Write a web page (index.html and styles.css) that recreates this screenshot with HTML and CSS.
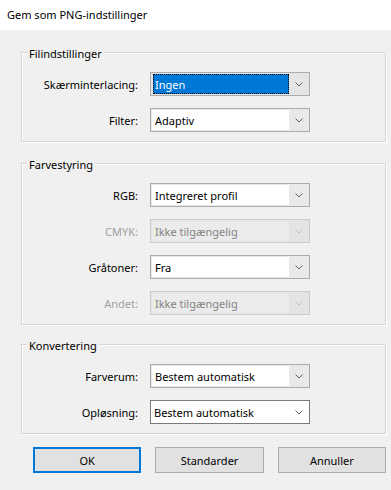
FILE: index.html
```html
<!DOCTYPE html>
<html lang="da">

<head>
  <meta charset="UTF-8">
  <meta name="viewport" content="width=device-width, initial-scale=1.0">
  <title>Gem som PNG-indstillinger</title>

  <link rel="stylesheet" href="styles.css">
</head>

<body>
  <header class="titlebar">Gem som PNG-indstillinger</header>

  <main class="dialog">
    <section class="group">
      <h2 class="group-title">Filindstillinger</h2>
      <div class="rows">
        <div class="row">
          <span class="label">Skærminterlacing:</span>
          <div class="combo combo-list">
            <span class="value"><span class="selected">Ingen</span></span>
            <span class="arrow"><svg width="8" height="5" viewBox="0 0 8 5"><path d="M0.5 0.5 L4 4 L7.5 0.5" /></svg></span>
          </div>
        </div>
        <div class="row">
          <span class="label">Filter:</span>
          <div class="combo">
            <span class="value">Adaptiv</span>
            <span class="arrow"><svg width="8" height="5" viewBox="0 0 8 5"><path d="M0.5 0.5 L4 4 L7.5 0.5" /></svg></span>
          </div>
        </div>
      </div>
    </section>

    <section class="group group-color">
      <h2 class="group-title">Farvestyring</h2>
      <div class="rows">
        <div class="row">
          <span class="label">RGB:</span>
          <div class="combo">
            <span class="value">Integreret profil</span>
            <span class="arrow"><svg width="8" height="5" viewBox="0 0 8 5"><path d="M0.5 0.5 L4 4 L7.5 0.5" /></svg></span>
          </div>
        </div>
        <div class="row">
          <span class="label disabled">CMYK:</span>
          <div class="combo combo-disabled">
            <span class="value">Ikke tilgængelig</span>
            <span class="arrow"><svg width="8" height="5" viewBox="0 0 8 5"><path d="M0.5 0.5 L4 4 L7.5 0.5" /></svg></span>
          </div>
        </div>
        <div class="row">
          <span class="label">Gråtoner:</span>
          <div class="combo">
            <span class="value">Fra</span>
            <span class="arrow"><svg width="8" height="5" viewBox="0 0 8 5"><path d="M0.5 0.5 L4 4 L7.5 0.5" /></svg></span>
          </div>
        </div>
        <div class="row">
          <span class="label disabled">Andet:</span>
          <div class="combo combo-disabled">
            <span class="value">Ikke tilgængelig</span>
            <span class="arrow"><svg width="8" height="5" viewBox="0 0 8 5"><path d="M0.5 0.5 L4 4 L7.5 0.5" /></svg></span>
          </div>
        </div>
      </div>
    </section>

    <section class="group group-convert">
      <h2 class="group-title">Konvertering</h2>
      <div class="rows">
        <div class="row">
          <span class="label">Farverum:</span>
          <div class="combo">
            <span class="value">Bestem automatisk</span>
            <span class="arrow"><svg width="8" height="5" viewBox="0 0 8 5"><path d="M0.5 0.5 L4 4 L7.5 0.5" /></svg></span>
          </div>
        </div>
        <div class="row">
          <span class="label">Opløsning:</span>
          <div class="combo combo-white">
            <span class="value">Bestem automatisk</span>
            <span class="arrow"><svg width="8" height="5" viewBox="0 0 8 5"><path d="M0.5 0.5 L4 4 L7.5 0.5" /></svg></span>
          </div>
        </div>
      </div>
    </section>

    <div class="buttons">
      <button class="btn btn-default">OK</button>
      <button class="btn">Standarder</button>
      <button class="btn">Annuller</button>
    </div>
  </main>
</body>

</html>
```

FILE: styles.css
```css
* {
  box-sizing: border-box;
}

body {
  background: #f0f0f0;
  color: #000;
  font-family: "Noto Sans", "Open Sans", sans-serif;
  font-size: 11px;
  height: 490px;
  margin: 0;
  overflow: hidden;
}

.titlebar {
  align-items: center;
  background: #fff;
  display: flex;
  height: 30px;
  padding: 0 0 2px 7px;
}

.dialog {
  padding: 0 5px 0 21px;
}

.group {
  border: 1px solid #d6d6d6;
  box-shadow: 1px 1px 0 #fff, inset 1px 1px 0 #fff;
  margin-top: 22px;
  padding: 0 0 9px;
}

.group-color {
  margin-top: 21px;
}

.group-convert {
  margin-top: 19px;
}

.group-title {
  background: #f0f0f0;
  font-size: 11px;
  font-weight: normal;
  line-height: 16px;
  margin: -7px 0 0 5px;
  padding: 0 2px;
  width: fit-content;
}

.rows {
  display: flex;
  flex-direction: column;
  margin-top: 10px;
  row-gap: 12px;
}

.row {
  align-items: center;
  column-gap: 12px;
  display: flex;
}

.label {
  text-align: right;
  width: 116px;
}

.label.disabled {
  color: #a0a0a0;
}

.combo {
  background: #e9e9e9;
  border: 1px solid #acacac;
  display: flex;
  height: 24px;
  width: 160px;
}

.combo .value {
  align-items: center;
  background: #fff;
  display: flex;
  flex: 1;
  margin: 1px 0 1px 1px;
  padding-left: 3px;
  white-space: nowrap;
}

.combo .arrow {
  align-items: center;
  display: flex;
  justify-content: center;
  width: 20px;
}

.combo .arrow path {
  fill: none;
  stroke: #606060;
  stroke-width: 1;
}

.combo-list {
  background: #e5e5e5;
}

.combo-list .value {
  background: transparent;
  margin: 1px 0 1px 2px;
  padding: 0;
}

.combo-list .selected {
  align-items: center;
  background: #0078d7;
  color: #fff;
  display: flex;
  height: 100%;
  outline: 1px dotted #000;
  outline-offset: -1px;
  padding-left: 2px;
  width: 100%;
}

.combo-white {
  background: #fff;
  border-color: #7a7a7a;
}

.combo-white .value {
  margin: 0;
}

.combo-disabled {
  background: #e4e4e4;
  border-color: #cccccc;
  color: #838383;
}

.combo-disabled .value {
  background: #ebebeb;
}

.combo-disabled .arrow path {
  stroke: #bfbfbf;
}

.buttons {
  column-gap: 14px;
  display: flex;
  margin-top: 13px;
  padding-left: 12px;
}

.btn {
  background: #e1e1e1;
  border: 1px solid #adadad;
  color: #000;
  font-family: inherit;
  font-size: 11px;
  height: 26px;
  padding: 0;
  width: 109px;
}

.btn-default {
  border: 2px solid #0078d7;
}
```
